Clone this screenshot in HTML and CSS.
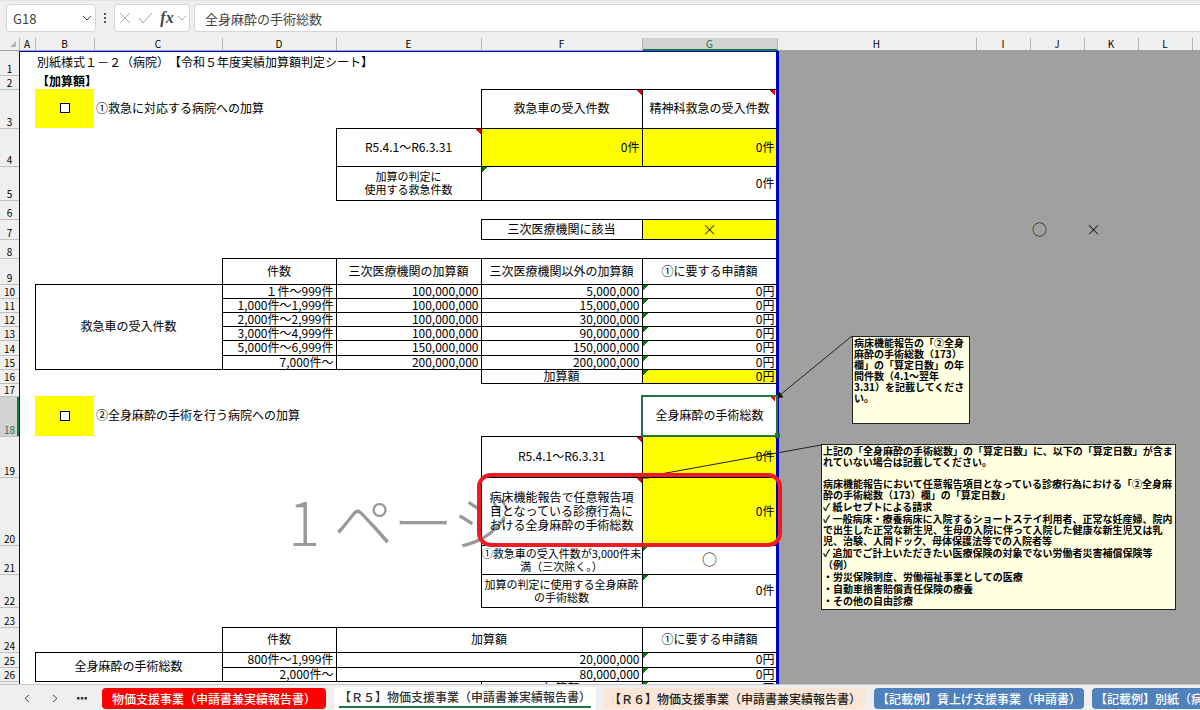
FILE: index.html
```html
<!DOCTYPE html>
<html lang="ja">
<head>
  <meta charset="UTF-8" />
  <meta name="viewport" content="width=device-width, initial-scale=1.0" />
  <title>加算額判定シート</title>
  <link rel="stylesheet" href="styles.css">
</head>
<body>
  <header class="formula-bar">
    <div class="name-box">
      <input type="text" class="name-input" value="G18" aria-label="名前ボックス" />
      <button type="button" class="icon-btn" aria-label="名前の一覧">
        <svg width="10" height="6" viewBox="0 0 10 6"><path d="M1 1l4 4 4-4" /></svg>
      </button>
    </div>
    <svg class="grip" width="3" height="11" viewBox="0 0 3 11"><path d="M0 0h2v2H0zM0 4h2v2H0zM0 8h2v2H0z" /></svg>
    <div class="fx-box">
      <button type="button" class="icon-btn muted" aria-label="キャンセル">
        <svg width="12" height="12" viewBox="0 0 12 12"><path d="M1 1l10 10M11 1L1 11" /></svg>
      </button>
      <button type="button" class="icon-btn muted" aria-label="入力">
        <svg width="15" height="12" viewBox="0 0 15 12"><path d="M1 6l4 5 9-10" /></svg>
      </button>
      <button type="button" class="icon-btn fx" aria-label="関数の挿入">fx</button>
      <button type="button" class="icon-btn muted" aria-label="関数の履歴">
        <svg width="10" height="6" viewBox="0 0 10 6"><path d="M1 1l4 4 4-4" /></svg>
      </button>
    </div>
    <input type="text" class="formula-input" value="全身麻酔の手術総数" aria-label="数式バー" />
  </header>

  <main class="sheet">
    <div class="page"><span class="watermark">1 ページ</span></div>

    <table class="grid">
      <colgroup>
        <col class="w-head"><col class="w-a"><col class="w-b"><col class="w-c"><col class="w-d"><col class="w-e"><col class="w-f"><col class="w-g"><col class="w-h">
        <col class="w-s"><col class="w-s"><col class="w-s"><col class="w-s"><col class="w-s">
      </colgroup>
      <thead>
        <tr>
          <th class="corner"><svg width="6" height="6" viewBox="0 0 6 6"><path d="M6 0v6H0z" /></svg></th>
          <th>A</th><th>B</th><th>C</th><th>D</th><th>E</th><th>F</th><th class="on">G</th><th>H</th><th>I</th><th>J</th><th>K</th><th>L</th><th></th>
        </tr>
      </thead>
      <tbody>
        <tr class="h25"><th>1</th><td></td><td colspan="6">別紙様式１－２（病院）　【令和５年度実績加算額判定シート】</td></tr>
        <tr class="h14"><th>2</th><td></td><td colspan="6" class="title">【加算額】</td></tr>
        <tr class="h39">
          <th>3</th><td></td>
          <td class="fill c"><input type="checkbox" id="er" class="tick" /></td>
          <td colspan="3"><label for="er">①救急に対応する病院への加算</label></td>
          <td class="b c memo">救急車の受入件数</td>
          <td class="b c memo last">精神科救急の受入件数</td>
        </tr>
        <tr class="h38"><th>4</th><td colspan="4"></td><td class="b c memo">R5.4.1～R6.3.31</td><td class="b r fill">0件</td><td class="b r fill">0件</td></tr>
        <tr class="h34"><th>5</th><td colspan="4"></td><td class="b c small">加算の判定に<br>使用する救急件数</td><td colspan="2" class="b r warn">0件</td></tr>
        <tr class="h19"><th>6</th><td colspan="7"></td></tr>
        <tr class="h20"><th>7</th><td colspan="5"></td><td class="b c">三次医療機関に該当</td><td class="b c fill mark">×</td><td colspan="2"></td><td class="mark">○</td><td class="mark">×</td></tr>
        <tr class="h19"><th>8</th><td colspan="7"></td></tr>
        <tr class="h26"><th>9</th><td colspan="3"></td><td class="b c">件数</td><td class="b c">三次医療機関の加算額</td><td class="b c">三次医療機関以外の加算額</td><td class="b c">①に要する申請額</td></tr>
        <tr class="h14"><th>10</th><td></td><td colspan="2" rowspan="6" class="b c">救急車の受入件数</td><td class="b r">１件～999件</td><td class="b r">100,000,000</td><td class="b r">5,000,000</td><td class="b r warn">0円</td></tr>
        <tr class="h14"><th>11</th><td></td><td class="b r">1,000件～1,999件</td><td class="b r">100,000,000</td><td class="b r">15,000,000</td><td class="b r warn">0円</td></tr>
        <tr class="h14"><th>12</th><td></td><td class="b r">2,000件～2,999件</td><td class="b r">100,000,000</td><td class="b r">30,000,000</td><td class="b r warn">0円</td></tr>
        <tr class="h14"><th>13</th><td></td><td class="b r">3,000件～4,999件</td><td class="b r">100,000,000</td><td class="b r">90,000,000</td><td class="b r warn">0円</td></tr>
        <tr class="h15"><th>14</th><td></td><td class="b r">5,000件～6,999件</td><td class="b r">150,000,000</td><td class="b r">150,000,000</td><td class="b r warn">0円</td></tr>
        <tr class="h14"><th>15</th><td></td><td class="b r">7,000件～</td><td class="b r">200,000,000</td><td class="b r">200,000,000</td><td class="b r warn">0円</td></tr>
        <tr class="h14"><th>16</th><td colspan="5"></td><td class="b c">加算額</td><td class="b r fill warn">0円</td></tr>
        <tr class="h13"><th>17</th><td colspan="7"></td></tr>
        <tr class="h40">
          <th class="on">18</th><td></td>
          <td class="fill c"><input type="checkbox" id="op" class="tick" /></td>
          <td colspan="4"><label for="op">②全身麻酔の手術を行う病院への加算</label></td>
          <td class="c memo last selected">全身麻酔の手術総数</td>
        </tr>
        <tr class="h41"><th>19</th><td colspan="5"></td><td class="b c memo">R5.4.1～R6.3.31</td><td class="b r fill">0件</td></tr>
        <tr class="h68"><th>20</th><td colspan="5"></td><td class="b c memo lines">病床機能報告で任意報告項<br>目となっている診療行為に<br>おける全身麻酔の手術総数</td><td class="b r fill">0件</td></tr>
        <tr class="h29"><th>21</th><td colspan="5"></td><td class="b c small">①救急車の受入件数が3,000件未<br>満（三次除く。）</td><td class="b c warn mark">○</td></tr>
        <tr class="h33"><th>22</th><td colspan="5"></td><td class="b c small">加算の判定に使用する全身麻酔<br>の手術総数</td><td class="b r warn">0件</td></tr>
        <tr class="h20"><th>23</th><td colspan="7"></td></tr>
        <tr class="h25"><th>24</th><td colspan="3"></td><td class="b c">件数</td><td colspan="2" class="b c">加算額</td><td class="b c">①に要する申請額</td></tr>
        <tr class="h15"><th>25</th><td></td><td colspan="2" rowspan="2" class="b c">全身麻酔の手術総数</td><td class="b r">800件～1,999件</td><td colspan="2" class="b r">20,000,000</td><td class="b r warn">0円</td></tr>
        <tr class="h14"><th>26</th><td></td><td class="b r">2,000件～</td><td colspan="2" class="b r">80,000,000</td><td class="b r warn">0円</td></tr>
        <tr class="h14"><th>27</th><td colspan="5"></td><td class="b c">加算額</td><td class="b r warn">0円</td></tr>
      </tbody>
    </table>

    <div class="page-break"></div>

    <svg class="connectors" width="1200" height="646">
      <path d="M852 298L780 357M821 407L644 439" />
      <path class="tip" d="M777 360l2-6 4 5zM643 440l5-3 1 3z" />
    </svg>

    <div class="marker"></div>

    <aside class="note note-a">
      <p>病床機能報告の「②全身<br>麻酔の手術総数（173）<br>欄」の「算定日数」の年<br>間件数（4.1～翌年<br>3.31）を記載してくださ<br>い。</p>
    </aside>

    <aside class="note note-b">
      <p>上記の「全身麻酔の手術総数」の「算定日数」に、以下の「算定日数」が含ま<br>れていない場合は記載してください。</p>
      <p class="spaced">病床機能報告において任意報告項目となっている診療行為における「②全身麻<br>酔の手術総数（173）欄」の「算定日数」</p>
      <p>✓ 紙レセプトによる請求</p>
      <p>✓ 一般病床・療養病床に入院するショートステイ利用者、正常な妊産婦、院内<br>で出生した正常な新生児、生母の入院に伴って入院した健康な新生児又は乳<br>児、治験、人間ドック、母体保護法等での入院者等</p>
      <p>✓ 追加でご計上いただきたい医療保険の対象でない労働者災害補償保険等</p>
      <p>（例）</p>
      <p>・労災保険制度、労働福祉事業としての医療</p>
      <p>・自動車損害賠償責任保険の療養</p>
      <p>・その他の自由診療</p>
    </aside>
  </main>

  <nav class="tabs">
    <div class="tab-nav">
      <button type="button" class="icon-btn" aria-label="前のシート"><svg width="6" height="9" viewBox="0 0 6 9"><path d="M5 1L1 4.500l4 3.500" /></svg></button>
      <button type="button" class="icon-btn" aria-label="次のシート"><svg width="6" height="9" viewBox="0 0 6 9"><path d="M1 1l4 3.500L1 8" /></svg></button>
      <button type="button" class="icon-btn dots" aria-label="シート一覧"><svg width="10" height="3" viewBox="0 0 10 3"><path d="M0 0h2.500v2.500H0zM3.800 0h2.500v2.500H3.800zM7.500 0H10v2.500H7.500z" /></svg></button>
    </div>
    <a href="#" class="tab red">物価支援事業（申請書兼実績報告書）</a>
    <a href="#" class="tab active"><span>【Ｒ５】物価支援事業（申請書兼実績報告書）</span></a>
    <a href="#" class="tab peach">【Ｒ６】物価支援事業（申請書兼実績報告書）</a>
    <a href="#" class="tab blue">【記載例】賃上げ支援事業（申請書）</a>
    <a href="#" class="tab blue">【記載例】別紙（病院）</a>
  </nav>
</body>
</html>
```

FILE: styles.css
```css
* { box-sizing: border-box; }
body { margin: 0; height: 100vh; display: flex; flex-direction: column; overflow: hidden; background: #efefef; color: #000; font-family: "Noto Sans CJK JP", sans-serif; font-size: 12px; }
input, button { font-family: inherit; margin: 0; padding: 0; border: 0; background: none; }

/* formula bar */
.formula-bar { flex: none; display: flex; align-items: center; height: 38px; padding: 3px 0 6px 6px; border-top: 1px solid #e4e4e4; }
.name-box, .fx-box { display: flex; align-items: center; height: 28px; background: #fff; border: 1px solid #d6d6d6; border-radius: 4px; }
.name-box { width: 90px; padding: 0 3px 0 6px; }
.name-input { flex: 1; min-width: 0; color: #444; font-size: 13px; }
.icon-btn { flex: none; display: flex; align-items: center; justify-content: center; }
.icon-btn svg { fill: none; stroke: #444; stroke-width: 1; }
.icon-btn.muted svg { stroke: #aaa; }
.grip { margin: 0 7px 0 8px; fill: #555; }
.fx-box { width: 76px; padding: 0 1px 0 4px; gap: 7px; }
.fx { width: 14px; font-family: "Liberation Serif", serif; font-style: italic; font-weight: bold; font-size: 16px; color: #444; }
.fx + .icon-btn { margin-left: -4px; }
.formula-input { flex: 1; height: 28px; margin-left: 4px; padding: 0 10px; background: #fff; border: 1px solid #d6d6d6; border-right: 0; border-radius: 4px 0 0 4px; color: #444; font-size: 13px; }

/* sheet */
.sheet { flex: 1; min-height: 0; position: relative; overflow: hidden; background: #a0a0a0; }
.page { position: absolute; left: 20px; top: 13px; width: 757px; bottom: 0; background: #fff; }
.watermark { position: absolute; left: 268px; top: 424px; line-height: 90px; font-size: 60px; font-weight: 300; color: #999; white-space: nowrap; }
.page-break { position: absolute; left: 19px; top: 13px; width: 760px; bottom: -4px; border: 2px solid #0000c8; border-width: 1px 3px 0 1px; }

.grid { position: relative; width: 1246px; table-layout: fixed; border-collapse: collapse; line-height: 12px; }
.w-head { width: 19px; }
.w-a { width: 16px; }
.w-b { width: 59px; }
.w-c { width: 128px; }
.w-d { width: 114px; }
.w-e { width: 145px; }
.w-f { width: 161px; }
.w-g { width: 135px; }
.w-h { width: 199px; }
.w-s { width: 54px; }

.grid th { padding: 0; background: #efefef; font-size: 10px; font-weight: normal; line-height: 12px; }
.grid thead th { height: 12px; line-height: 11px; border-right: 1px solid #b4b4b4; border-bottom: 1px solid #a0a0a0; }
tbody th { vertical-align: bottom; border-bottom: 1px solid #c0c0c0; }
.grid th.on { background: #d2d2d2; color: #217346; }
thead th.on { box-shadow: inset 0 -1px #107c41; border-bottom-color: #107c41; }
tbody th.on { box-shadow: inset -2px 0 #107c41; }
.corner svg { display: block; margin-left: 10px; fill: #b4b4b4; }

.grid td { padding: 0 2px 1px; white-space: nowrap; vertical-align: middle; }
.grid td.b { border: 1px solid #000; }
.c { text-align: center; }
.r { text-align: right; }
.fill { background-color: #ff0; }
.title { font-weight: bold; }
.mark { font-size: 15px; font-weight: 300; }
.lines { line-height: 14px; }
.grid td.small { padding: 0; font-size: 11px; line-height: 13px; }
.memo, .warn { background-repeat: no-repeat; background-size: 6px 6px; }
.memo { background-image: linear-gradient(225deg, #e00 4px, transparent 4px); background-position: right top; }
.memo.last { background-position: right 2px top; }
.warn { background-image: linear-gradient(135deg, #008000 4px, transparent 4px); }
.selected { position: relative; }
.selected::before { content: ""; position: absolute; z-index: 2; inset: -1px; border: 2px solid #217346; }
.selected::after { content: ""; position: absolute; z-index: 2; right: -3px; bottom: -2px; width: 5px; height: 5px; background: #217346; }
.tick { appearance: none; display: block; width: 10px; height: 10px; margin: 0 auto; border: 1px solid #000; background: #fff; }

.h13 { height: 13px; }
.h14 { height: 14px; }
.h15 { height: 15px; }
.h19 { height: 19px; }
.h20 { height: 20px; }
.h25 { height: 25px; }
.h26 { height: 26px; }
.h29 { height: 29px; }
.h33 { height: 33px; }
.h34 { height: 34px; }
.h38 { height: 38px; }
.h39 { height: 39px; }
.h40 { height: 40px; }
.h41 { height: 41px; }
.h68 { height: 68px; }

/* notes over the sheet */
.connectors { position: absolute; left: 0; top: 0; fill: none; stroke: #222; stroke-width: 1; }
.connectors .tip { fill: #000; }
.marker { position: absolute; left: 477px; top: 435px; width: 305px; height: 74px; border: 4px solid #ed1c24; border-radius: 14px; }
.note { position: absolute; display: flex; flex-direction: column; gap: 1px; padding: 0 1px; background: #ffffe1; border: 1px solid #222; font-size: 10px; font-weight: bold; line-height: 11px; white-space: nowrap; }
.note p { margin: 0; }
.note .spaced { margin-top: 10px; }
.note-a { left: 852px; top: 298px; width: 118px; height: 88px; }
.note-b { left: 821px; top: 406px; width: 355px; height: 166px; }

/* sheet tabs */
.tabs { flex: none; display: flex; align-items: center; gap: 8px; height: 26px; padding-top: 2px; border-top: 1px solid #c8c8c8; overflow: hidden; }
.tab-nav { flex: none; display: flex; align-items: center; gap: 22px; width: 94px; padding-left: 24px; }
.dots { margin-left: -3px; }
.tab-nav .dots svg { fill: #333; stroke: none; }
.tab { flex: none; height: 21px; padding: 0 8px; border-radius: 4px; line-height: 21px; font-weight: 500; text-decoration: none; color: #222; white-space: nowrap; }
.red { padding: 0 10px; background: #f00; color: #fff; }
.active { height: 24px; padding: 0 5px; border-radius: 0 0 4px 4px; background: #fff; color: #333; }
.active span { display: block; height: 21px; border-bottom: 2px solid #217346; line-height: 20px; }
.peach { padding: 0 5px; background: #fbe5d6; }
.blue { padding: 0 3px; background: #4f81bd; color: #fff; }
```
